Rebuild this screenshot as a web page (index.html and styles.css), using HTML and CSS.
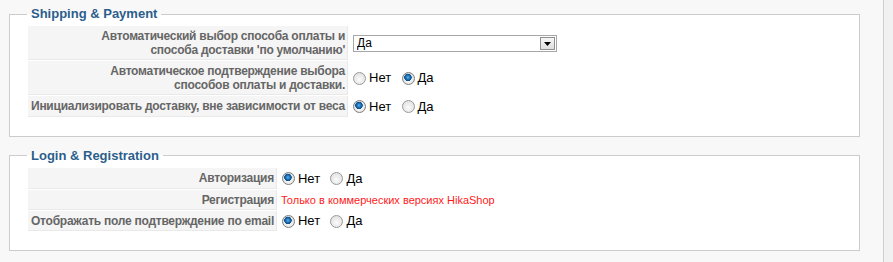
FILE: index.html
```html
<!DOCTYPE html>
<html lang="ru">
<head>
    <meta charset="UTF-8">
    <title>HikaShop - Configuration</title>
    <link rel="stylesheet" href="styles.css">
</head>
<body>
    <div class="page">
        <!-- Shipping & Payment -->
        <fieldset class="adminform">
            <legend>Shipping &amp; Payment</legend>
            <table class="admintable">
                <tr>
                    <td class="key">Автоматический выбор способа оплаты и <br>способа доставки 'по умолчанию'</td>
                    <td class="value">
                        <span class="select-wrap">
                            <select class="inputbox">
                                <option>Да</option>
                                <option>Нет</option>
                            </select>
                            <span class="select-btn">
                                <svg width="7" height="4" viewBox="0 0 7 4"><path d="M0 0H7L3.5 4Z" fill="#000"/></svg>
                            </span>
                        </span>
                    </td>
                </tr>
                <tr>
                    <td class="key">Автоматическое подтверждение выбора <br>способов оплаты и доставки.</td>
                    <td class="value">
                        <label class="radio"><input type="radio" name="auto_confirm"> Нет</label>
                        <label class="radio"><input type="radio" name="auto_confirm" checked> Да</label>
                    </td>
                </tr>
                <tr>
                    <td class="key">Инициализировать доставку, вне зависимости от веса</td>
                    <td class="value">
                        <label class="radio"><input type="radio" name="force_shipping" checked> Нет</label>
                        <label class="radio"><input type="radio" name="force_shipping"> Да</label>
                    </td>
                </tr>
            </table>
        </fieldset>

        <!-- Login & Registration -->
        <fieldset class="adminform">
            <legend>Login &amp; Registration</legend>
            <table class="admintable">
                <tr>
                    <td class="key">Авторизация</td>
                    <td class="value">
                        <label class="radio"><input type="radio" name="login" checked> Нет</label>
                        <label class="radio"><input type="radio" name="login"> Да</label>
                    </td>
                </tr>
                <tr>
                    <td class="key">Регистрация</td>
                    <td class="value"><span class="only-pro">Только в коммерческих версиях HikaShop</span></td>
                </tr>
                <tr>
                    <td class="key">Отображать поле подтверждение по email</td>
                    <td class="value">
                        <label class="radio"><input type="radio" name="email_confirm" checked> Нет</label>
                        <label class="radio"><input type="radio" name="email_confirm"> Да</label>
                    </td>
                </tr>
            </table>
        </fieldset>
    </div>
</body>
</html>
```
FILE: styles.css
```css
* {
  box-sizing: border-box;
}

body {
  margin: 0;
  background-color: #f1f1f1;
  font-family: "Liberation Sans", Arial, sans-serif;
  font-size: 12px;
  color: #000;
}

.page {
  width: 884px;
  min-height: 262px;
  background-color: #f8f8f8;
  border-right: 1px solid #cfcfcf;
  padding: 6px 24px 0 9px;
}

fieldset.adminform {
  width: 851px;
  margin: 0 0 11px 0;
  padding: 3px 10px 18px 17px;
  border: 1px solid #cccccc;
  background-color: #fff;
}

fieldset.adminform legend {
  padding: 0 4px;
  font-size: 13px;
  line-height: 16px;
  font-weight: bold;
  color: #2c5e8c;
}

.admintable {
  border-collapse: separate;
  border-spacing: 1px;
}

.admintable td {
  padding: 3px;
  line-height: 14px;
}

.admintable td.key {
  background-color: #f5f5f5;
  border-bottom: 1px solid #e9e9e9;
  border-right: 1px solid #e9e9e9;
  text-align: right;
  font-weight: bold;
  color: #666;
  letter-spacing: -0.25px;
  white-space: nowrap;
  padding: 3px 2px 2px 3px;
}

.admintable td.value {
  white-space: nowrap;
  vertical-align: middle;
}

/* select */
.select-wrap {
  position: relative;
  display: inline-block;
  vertical-align: middle;
  margin-left: 1px;
}

.inputbox {
  appearance: none;
  -webkit-appearance: none;
  width: 204px;
  height: 17px;
  margin: 0;
  padding: 0 0 0 3px;
  border: 1px solid #a7a7a7;
  border-radius: 0;
  background-color: #fff;
  font-family: "Liberation Sans", Arial, sans-serif;
  font-size: 12px;
  color: #000;
  display: block;
}

.select-btn {
  position: absolute;
  top: 2px;
  right: 2px;
  width: 15px;
  height: 13px;
  border: 1px solid #8f8f8f;
  background: linear-gradient(#f6f6f6, #dedede);
  display: flex;
  align-items: center;
  justify-content: center;
  padding-top: 2px;
  pointer-events: none;
}

/* radios */
.radio {
  display: inline-flex;
  align-items: center;
  font-size: 13px;
  line-height: 14px;
  color: #000;
  margin-right: 6px;
  margin-left: 1px;
  vertical-align: middle;
}

.radio input {
  appearance: none;
  -webkit-appearance: none;
  width: 13px;
  height: 13px;
  margin: 0 3px 0 0;
  border: 1px solid #9a9a9a;
  border-radius: 50%;
  background: radial-gradient(circle at 50% 60%, #fbfbfb 0, #e4e4e4 70%, #d4d4d4 100%);
}

.radio input:checked {
  border-color: #7d7d7d;
  background:
    radial-gradient(circle at 45% 40%, #5fb4ea 0, #1d72b8 2px, #0c4d8a 3.5px, transparent 4px),
    radial-gradient(circle at 50% 60%, #fbfbfb 0, #e4e4e4 70%, #d4d4d4 100%);
}

.only-pro {
  font-size: 11px;
  line-height: 14px;
  color: #ff1a1a;
}
```
